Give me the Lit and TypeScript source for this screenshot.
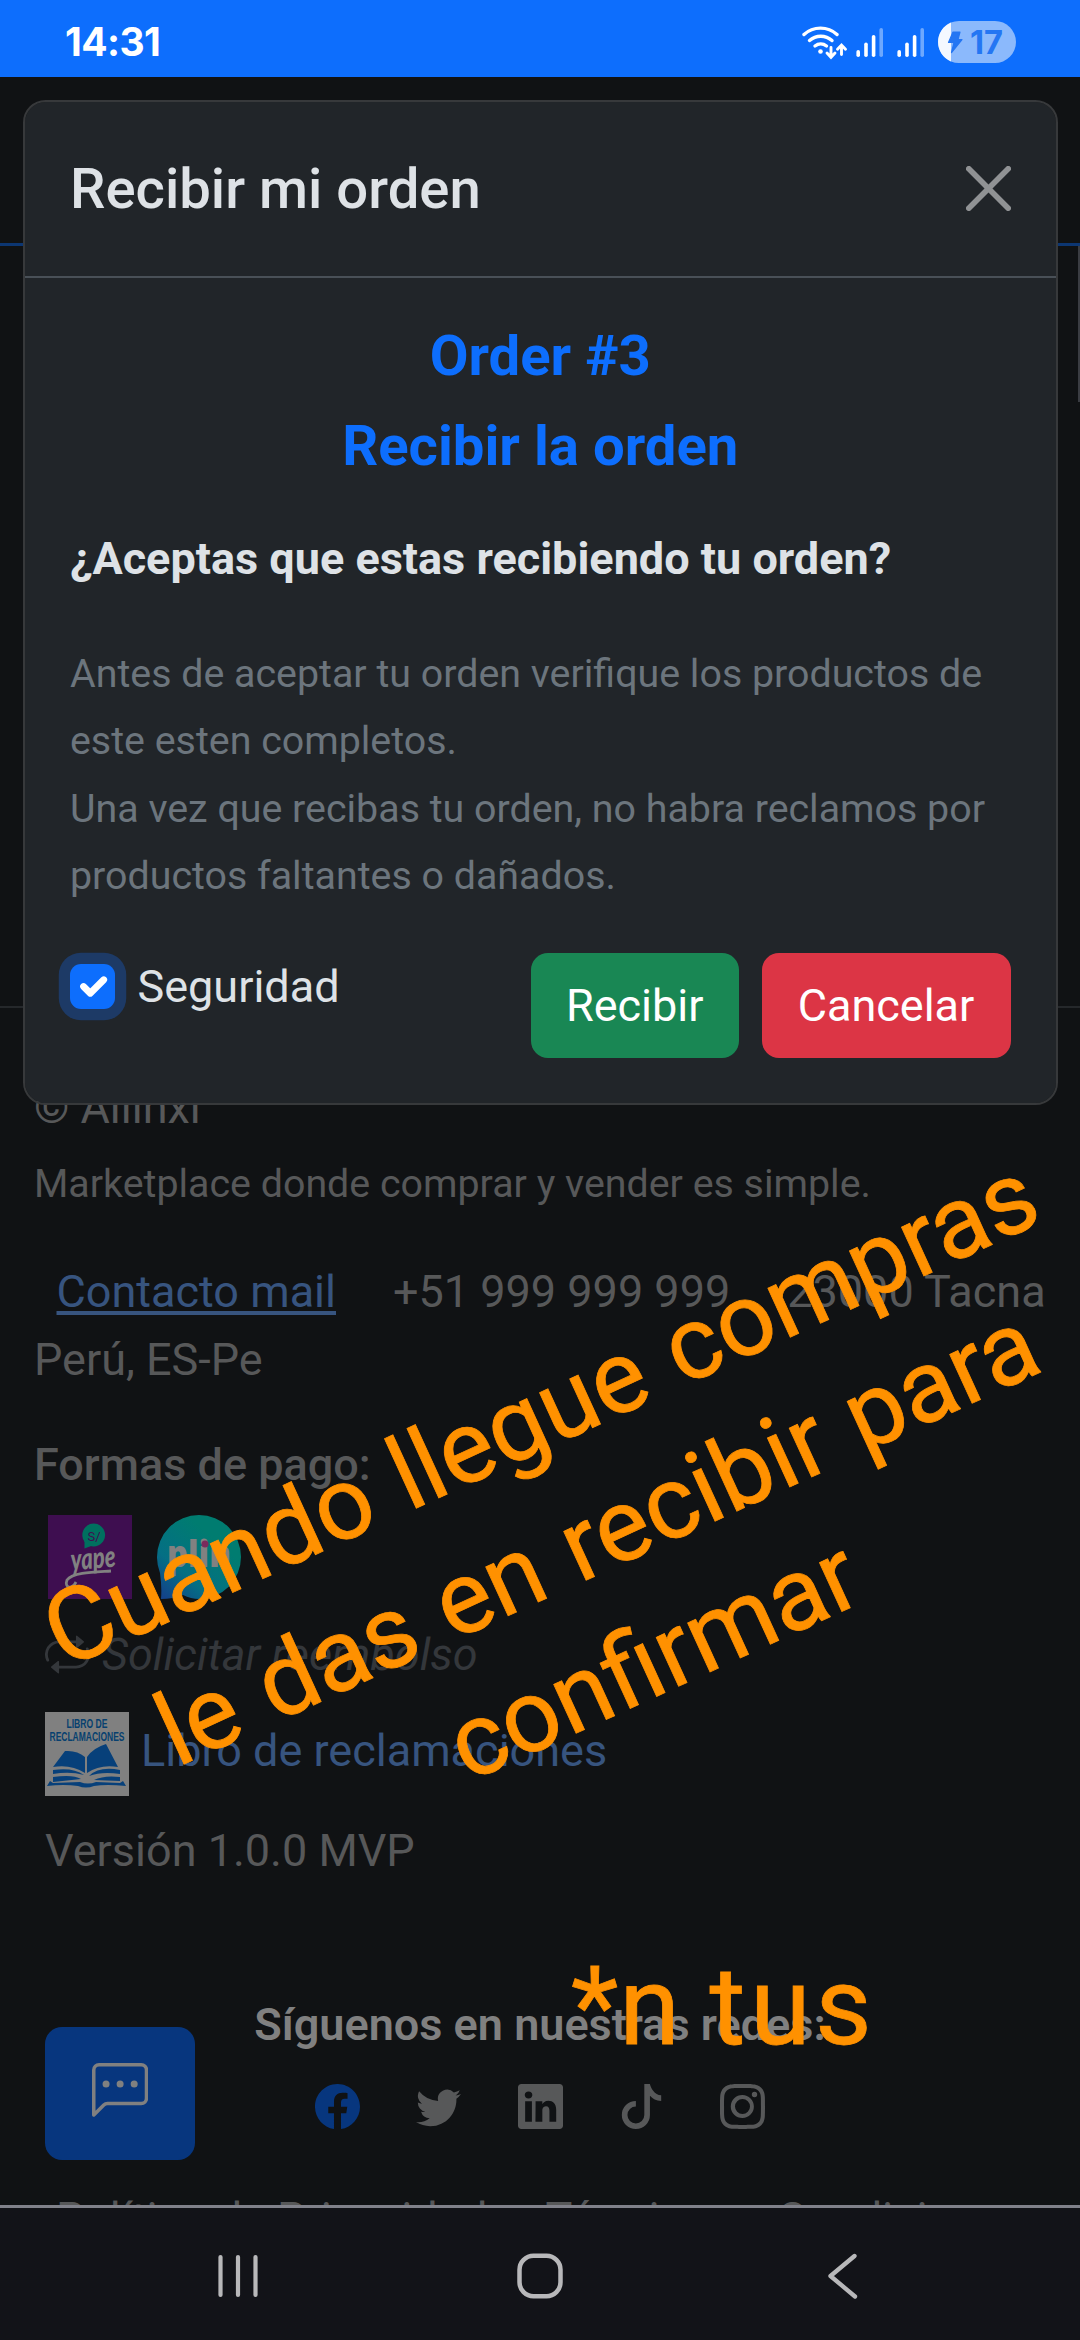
import { LitElement, html, css, svg } from "lit";
import { customElement } from "lit/decorators.js";

const ICONS: Record<string, string[]> = {
  facebook: [
    "M16 8.049c0-4.446-3.582-8.05-8-8.05C3.58 0-.002 3.603-.002 8.05c0 4.017 2.926 7.347 6.75 7.951v-5.625h-2.03V8.05H6.75V6.275c0-2.017 1.195-3.131 3.022-3.131.876 0 1.791.157 1.791.157v1.98h-1.009c-.993 0-1.303.621-1.303 1.258v1.51h2.218l-.354 2.326H9.25V16c3.824-.604 6.75-3.934 6.75-7.951",
  ],
  twitter: [
    "M5.026 15c6.038 0 9.341-5.003 9.341-9.334q.002-.211-.006-.422A6.7 6.7 0 0 0 16 3.542a6.7 6.7 0 0 1-1.889.518 3.3 3.3 0 0 0 1.447-1.817 6.5 6.5 0 0 1-2.087.793A3.286 3.286 0 0 0 7.875 6.03a9.32 9.32 0 0 1-6.767-3.429 3.29 3.29 0 0 0 1.018 4.382A3.3 3.3 0 0 1 .64 6.575v.045a3.29 3.29 0 0 0 2.632 3.218 3.2 3.2 0 0 1-.865.115 3 3 0 0 1-.614-.057 3.28 3.28 0 0 0 3.067 2.277A6.6 6.6 0 0 1 .78 13.58a6 6 0 0 1-.78-.045A9.34 9.34 0 0 0 5.026 15",
  ],
  linkedin: [
    "M0 1.146C0 .513.526 0 1.175 0h13.65C15.474 0 16 .513 16 1.146v13.708c0 .633-.526 1.146-1.175 1.146H1.175C.526 16 0 15.487 0 14.854zm4.943 12.248V6.169H2.542v7.225zm-1.2-8.212c.837 0 1.358-.554 1.358-1.248-.015-.709-.52-1.248-1.342-1.248S2.4 3.226 2.4 3.934c0 .694.521 1.248 1.327 1.248zm4.908 8.212V9.359c0-.216.016-.432.08-.586.173-.431.568-.878 1.232-.878.869 0 1.216.662 1.216 1.634v3.865h2.401V9.25c0-2.22-1.184-3.252-2.764-3.252-1.274 0-1.845.7-2.165 1.193v.025h-.016l.016-.025V6.169h-2.4c.03.678 0 7.225 0 7.225z",
  ],
  tiktok: [
    "M9 0h1.98c.144.715.54 1.617 1.235 2.512C12.895 3.389 13.797 4 15 4v2c-1.753 0-3.07-.814-4-1.829V11a5 5 0 1 1-5-5v2a3 3 0 1 0 3 3z",
  ],
  instagram: [
    "M8 0C5.829 0 5.556.01 4.703.048 3.85.088 3.269.222 2.76.42a3.9 3.9 0 0 0-1.417.923A3.9 3.9 0 0 0 .42 2.76C.222 3.268.087 3.85.048 4.7.01 5.555 0 5.827 0 8.001c0 2.172.01 2.444.048 3.297.04.852.174 1.433.372 1.942.205.526.478.972.923 1.417.444.445.89.719 1.416.923.51.198 1.09.333 1.942.372C5.555 15.99 5.827 16 8 16s2.444-.01 3.298-.048c.851-.04 1.434-.174 1.943-.372a3.9 3.9 0 0 0 1.416-.923c.445-.445.718-.891.923-1.417.197-.509.332-1.09.372-1.942C15.99 10.445 16 10.173 16 8s-.01-2.445-.048-3.299c-.04-.851-.175-1.433-.372-1.941a3.9 3.9 0 0 0-.923-1.417A3.9 3.9 0 0 0 13.24.42c-.51-.198-1.092-.333-1.943-.372C10.443.01 10.172 0 7.998 0zm-.717 1.442h.718c2.136 0 2.389.007 3.232.046.78.035 1.204.166 1.486.275.373.145.64.319.92.599s.453.546.598.92c.11.281.24.705.275 1.485.039.843.047 1.096.047 3.231s-.008 2.389-.047 3.232c-.035.78-.166 1.203-.275 1.485a2.5 2.5 0 0 1-.599.919c-.28.28-.546.453-.92.598-.28.11-.704.24-1.485.276-.843.038-1.096.047-3.232.047s-2.39-.009-3.233-.047c-.78-.036-1.203-.166-1.485-.276a2.5 2.5 0 0 1-.92-.598 2.5 2.5 0 0 1-.6-.92c-.109-.281-.24-.705-.275-1.485-.038-.843-.046-1.096-.046-3.233s.008-2.388.046-3.231c.036-.78.166-1.204.276-1.486.145-.373.319-.64.599-.92s.546-.453.92-.598c.282-.11.705-.24 1.485-.276.738-.034 1.024-.044 2.515-.045zm4.988 1.328a.96.96 0 1 0 0 1.92.96.96 0 0 0 0-1.92m-4.27 1.122a4.109 4.109 0 1 0 0 8.217 4.109 4.109 0 0 0 0-8.217m0 1.441a2.667 2.667 0 1 1 0 5.334 2.667 2.667 0 0 1 0-5.334",
  ],
  repeat: [
    "M11 5.466V4H5a4 4 0 0 0-3.584 5.777.5.5 0 1 1-.896.446A5 5 0 0 1 5 3h6V1.534a.25.25 0 0 1 .41-.192l2.36 1.966c.12.1.12.284 0 .384l-2.36 1.966a.25.25 0 0 1-.41-.192m3.81.086a.5.5 0 0 1 .67.225A5 5 0 0 1 11 13H5v1.466a.25.25 0 0 1-.41.192l-2.36-1.966a.25.25 0 0 1 0-.384l2.36-1.966a.25.25 0 0 1 .41.192V12h6a4 4 0 0 0 3.585-5.777.5.5 0 0 1 .225-.67z",
  ],
  chat: [
    "M14 1a1 1 0 0 1 1 1v8a1 1 0 0 1-1 1H4.414A2 2 0 0 0 3 11.586l-2 2V2a1 1 0 0 1 1-1zM2 0a2 2 0 0 0-2 2v12.793a.5.5 0 0 0 .854.353l2.853-2.853A1 1 0 0 1 4.414 12H14a2 2 0 0 0 2-2V2a2 2 0 0 0-2-2z",
    "M5 6a1 1 0 1 1-2 0 1 1 0 0 1 2 0m4 0a1 1 0 1 1-2 0 1 1 0 0 1 2 0m4 0a1 1 0 1 1-2 0 1 1 0 0 1 2 0",
  ],
  close: [
    "M.293.293a1 1 0 0 1 1.414 0L8 6.586 14.293.293a1 1 0 1 1 1.414 1.414L9.414 8l6.293 6.293a1 1 0 0 1-1.414 1.414L8 9.414l-6.293 6.293a1 1 0 0 1-1.414-1.414L6.586 8 .293 1.707a1 1 0 0 1 0-1.414",
  ],
};

const icon = (name: string, cls = "") => html`
  <svg class="icon ${cls}" viewBox="0 0 16 16" fill="currentColor">
    ${ICONS[name].map((d) => svg`<path d=${d}></path>`)}
  </svg>
`;

@customElement("status-bar")
class StatusBar extends LitElement {
  static styles = css`
    :host {
      display: flex;
      align-items: center;
      box-sizing: border-box;
      height: 77px;
      padding: 0 64px 0 65px;
      background: #0d6efd;
      color: #fff;
      font-family: Inter, Roboto, sans-serif;
    }
    .time {
      flex: 1;
      font-size: 39px;
      line-height: 46px;
      font-weight: 700;
      letter-spacing: -0.6px;
      padding-top: 7px;
    }
    .signals {
      width: 214px;
      height: 42px;
      padding-top: 7px;
    }
    .num {
      font: 700 32px Inter, Roboto, sans-serif;
    }
  `;
  render() {
    return html`
      <div class="time">14:31</div>
      <svg class="signals" viewBox="802 21 214 42">
        <g fill="none" stroke="#fff" stroke-width="3.4" stroke-linecap="round">
          <path d="M804 34.500a24.500 24.500 0 0 1 33 0"></path>
          <path d="M809.500 40.500a17 17 0 0 1 22.500 0"></path>
          <path d="M815 46a9.500 9.500 0 0 1 11.500 0"></path>
          <path d="M831 47.500v9.500m-4-4l4 4.300 4-4.300" stroke-width="2.900"></path>
          <path d="M841.500 54.500v-9m-4 3.700l4-4.200 4 4.200" stroke-width="2.900"></path>
        </g>
        <circle cx="820.500" cy="51.500" r="2.300" fill="#fff"></circle>
        ${[856.4, 897.4].map(
          (x) => svg`
          <g fill="#fff">
            <rect x=${x} y="50" width="3.600" height="7" rx="1.800"></rect>
            <rect x=${x + 7.8} y="42.500" width="3.600" height="14.500" rx="1.800"></rect>
            <rect x=${x + 15.4} y="35" width="3.600" height="22" rx="1.800"></rect>
            <rect x=${x + 23} y="28" width="3.600" height="29" rx="1.800" opacity="0.400"></rect>
          </g>`
        )}
        <path d="M959 21h36a21 21 0 0 1 0 42h-36a21 21 0 0 1 0-42z" fill="#8bb9fc"></path>
        <path d="M951 22.600v38.800a21 21 0 0 1 0-38.800z" fill="#f4f8ff"></path>
        <path d="M953 32h7l-2 7.500h4l-10.500 13 2.500-10h-5.500z" fill="#2476f3" stroke="#2476f3" stroke-width="1.200" stroke-linejoin="round"></path>
        <text class="num" x="970" y="53.500" textLength="33" lengthAdjust="spacingAndGlyphs" fill="#2476f3">17</text>
      </svg>
    `;
  }
}

@customElement("site-footer")
class SiteFooter extends LitElement {
  static styles = css`
    :host {
      display: flex;
      flex-direction: column;
      height: 1199px;
      box-sizing: border-box;
      border-top: 2px solid #25282b;
      padding: 66px 34px 0;
      color: #575859;
      font-size: 45px;
      line-height: 67.5px;
      overflow: hidden;
      white-space: nowrap;
    }
    .icon {
      width: 45px;
      height: 45px;
      display: block;
    }
    .tagline {
      font-size: 39.375px;
      margin-top: 8px;
    }
    .contact {
      display: flex;
      gap: 57px;
      margin-top: 41px;
      padding-left: 22.5px;
    }
    .link {
      color: #37547f;
    }
    .mail {
      text-decoration: underline;
      text-decoration-thickness: 4px;
      text-underline-offset: 4px;
    }
    .heading {
      font-weight: 500;
      margin-top: 38px;
    }
    .pay {
      display: flex;
      gap: 25px;
      margin-top: 16px;
      padding-left: 14px;
    }
    .logo {
      width: 84px;
      height: 84px;
      display: block;
    }
    .refund {
      display: flex;
      align-items: center;
      gap: 12px;
      margin-top: 22.5px;
      padding-left: 11px;
      color: #34373b;
      font-style: italic;
    }
    .book {
      display: flex;
      gap: 14px;
      margin-top: 23px;
      padding-left: 11px;
    }
    .book .link {
      margin: 5px 0 0 -2px;
    }
    .version {
      margin-top: 21.5px;
      padding-left: 11px;
    }
    .follow {
      margin-top: 106px;
      text-align: center;
      font-weight: 600;
      color: #808080;
    }
    .social {
      display: flex;
      justify-content: center;
      gap: 56.25px;
      margin-top: 26px;
    }
    .fb {
      color: #07367e;
    }
    .legal {
      display: flex;
      gap: 58px;
      margin-top: 56px;
      padding-left: 22px;
    }
    .yape {
      font: italic 900 30px Lato, sans-serif;
    }
    .plin {
      font: 800 37px "Open Sans", sans-serif;
    }
    .libro {
      font: 700 12px "Liberation Sans", sans-serif;
    }
    .sol {
      font: 400 13px Roboto, sans-serif;
    }
  `;
  render() {
    return html`
      <div>© Allinxi</div>
      <div class="tagline">Marketplace donde comprar y vender es simple.</div>
      <div class="contact">
        <span class="link mail">Contacto mail</span><span>+51 999 999 999</span><span>23000 Tacna</span>
      </div>
      <div>Perú, ES-Pe</div>
      <div class="heading">Formas de pago:</div>
      <div class="pay">
        <svg class="logo" viewBox="0 0 84 84">
          <rect width="84" height="84" fill="#3e0e50"></rect>
          <circle cx="45.700" cy="20" r="11.400" fill="#00705f"></circle>
          <path d="M36.500 24v9.500l8-3z" fill="#00705f"></path>
          <text class="sol" x="39.500" y="25.500" fill="#3e0e50">S/</text>
          <text class="yape" x="23" y="54" textLength="45" lengthAdjust="spacingAndGlyphs" fill="#818181" transform="rotate(-5 40 50)">yape</text>
          <path d="M63 56C48 57 25 57 19 65c-3 8 5 10 9 2" fill="none" stroke="#818181" stroke-width="2.800"></path>
        </svg>
        <svg class="logo" viewBox="0 0 84 84">
          <defs>
            <linearGradient id="pg" x1="0.050" y1="0.950" x2="0.650" y2="0.250">
              <stop offset="0" stop-color="#13438a"></stop>
              <stop offset="0.400" stop-color="#046f84"></stop>
              <stop offset="1" stop-color="#007c70"></stop>
            </linearGradient>
          </defs>
          <path d="M0 42a42 42 0 1 1 42 42q-8 0-16-4-10 4-22 4 1-12-1-26a42 42 0 0 1-3-16z" fill="url(#pg)"></path>
          <text class="plin" x="10" y="52" textLength="64" lengthAdjust="spacingAndGlyphs" fill="#818181">plin</text>
          <circle cx="48" cy="29" r="3.500" fill="#7a2a5c"></circle>
        </svg>
      </div>
      <div class="refund">${icon("repeat")}<span>Solicitar reembolso</span></div>
      <div class="book">
        <svg class="logo" viewBox="0 0 84 84">
          <rect width="84" height="84" fill="#808080"></rect>
          <g class="libro" fill="#07406f" text-anchor="middle">
            <text x="42" y="16" textLength="41" lengthAdjust="spacingAndGlyphs">LIBRO DE</text>
            <text x="42" y="28.800" textLength="75" lengthAdjust="spacingAndGlyphs">RECLAMACIONES</text>
          </g>
          <g fill="#07407a">
            <path d="M8 55L20 39q12-1 20 6v16q-14-9-32-6z"></path>
            <path d="M42 61V45q6-9 19-13l12 23q-18-3-31 6z"></path>
            <path d="M8 58q20-3 31 5-14-4-31-1z"></path>
            <path d="M44 64q10-10 31-6v4q-18-3-31 2z"></path>
            <path d="M8 65q20-3 28 2l-28 3z"></path>
            <path d="M49 68q10-5 26-3v4z"></path>
            <path d="M5 69l3 2 27-1q8 3 16 0l24 1 3-2 3 5q-20-2-32 0-8 3-16 0-14-2-31 0z"></path>
          </g>
        </svg>
        <span class="link">Libro de reclamaciones</span>
      </div>
      <div class="version">Versión 1.0.0 MVP</div>
      <div class="follow">Síguenos en nuestras redes:</div>
      <div class="social">
        ${icon("facebook", "fb")}${icon("twitter")}${icon("linkedin")}${icon("tiktok")}${icon("instagram")}
      </div>
      <div class="legal"><span>Política de Privacidad</span><span>Términos y Condiciones</span></div>
    `;
  }
}

@customElement("receive-dialog")
class ReceiveDialog extends LitElement {
  static styles = css`
    :host {
      display: flex;
      flex-direction: column;
      box-sizing: border-box;
      border: 2px solid #37393b;
      border-radius: 22.5px;
      background: #212529;
      background-clip: padding-box;
      color: #dee2e6;
      font-size: 45px;
      line-height: 67.5px;
      white-space: nowrap;
    }
    .head {
      display: flex;
      align-items: center;
      justify-content: space-between;
      height: 174px;
      padding: 0 45px;
      border-bottom: 2px solid #495057;
    }
    .title {
      font-size: 56.25px;
      line-height: 84.4px;
      font-weight: 500;
    }
    .icon {
      width: 45px;
      height: 45px;
      margin-bottom: 2px;
      color: #909294;
      display: block;
    }
    .body {
      padding: 45px 45px 44px;
    }
    .blue {
      font-size: 56.25px;
      font-weight: 700;
      text-align: center;
      color: #0d6efd;
      margin-bottom: 22.5px;
    }
    .ask {
      font-weight: 700;
      margin-top: 44.5px;
    }
    .note {
      font-size: 39.375px;
      color: #6c757d;
      margin-top: 47px;
    }
    .foot {
      display: flex;
      align-items: flex-start;
      margin-top: 43px;
    }
    .check {
      display: flex;
      gap: 22.5px;
      flex: 1;
    }
    .box {
      width: 45px;
      height: 45px;
      margin-top: 11px;
      border-radius: 11px;
      background: #0d6efd;
      box-shadow: 0 0 0 11.25px #1d3a66;
      display: block;
    }
    .btn {
      box-sizing: border-box;
      height: 105px;
      border-radius: 17px;
      line-height: 105px;
      text-align: center;
      color: #fff;
      width: 208.5px;
      background: #198754;
    }
    .cancel {
      width: 249px;
      background: #dc3545;
      margin-left: 22.5px;
    }
  `;
  render() {
    return html`
      <div class="head"><span class="title">Recibir mi orden</span>${icon("close")}</div>
      <div class="body">
        <div class="blue">Order #3</div>
        <div class="blue">Recibir la orden</div>
        <div class="ask">¿Aceptas que estas recibiendo tu orden?</div>
        <div class="note">
          Antes de aceptar tu orden verifique los productos de<br />este esten completos.<br />Una vez que
          recibas tu orden, no habra reclamos por<br />productos faltantes o dañados.
        </div>
        <div class="foot">
          <div class="check">
            <svg class="box" viewBox="0 0 20 20">
              <path d="m6 10 3 3 6-6" fill="none" stroke="#fff" stroke-width="3" stroke-linecap="round" stroke-linejoin="round"></path>
            </svg>
            <span>Seguridad</span>
          </div>
          <div class="btn">Recibir</div>
          <div class="btn cancel">Cancelar</div>
        </div>
      </div>
    `;
  }
}

@customElement("nav-bar")
class NavBar extends LitElement {
  static styles = css`
    :host {
      display: grid;
      grid-template-columns: 238px 604px 238px;
      align-items: center;
      box-sizing: border-box;
      height: 135px;
      border-top: 3px solid #80818a;
      background: #121318;
    }
    .glyph {
      width: 50px;
      height: 50px;
      display: block;
      margin: 4px auto 0;
    }
    .start {
      margin-right: -25px;
    }
    .end {
      margin-left: -25px;
    }
  `;
  render() {
    return html`
      <svg class="glyph start" viewBox="0 0 50 50" stroke="#b8b8ba" stroke-width="4.200" stroke-linecap="round">
        <path d="M7.500 6v38M25 6v38M42.500 6v38"></path>
      </svg>
      <svg class="glyph" viewBox="0 0 50 50" fill="none" stroke="#b8b8ba" stroke-width="4.500">
        <rect x="4.500" y="4.800" width="41" height="40.500" rx="14"></rect>
      </svg>
      <svg class="glyph end" viewBox="0 0 50 50" fill="none" stroke="#b8b8ba" stroke-width="4.300" stroke-linecap="round" stroke-linejoin="round">
        <path d="M37.500 5L13.500 25 38 45.500"></path>
      </svg>
    `;
  }
}

@customElement("app-root")
class AppRoot extends LitElement {
  static styles = css`
    :host {
      display: flex;
      flex-direction: column;
      position: relative;
      width: 1080px;
      height: 2340px;
      overflow: hidden;
      background: #101214;
      font-family: Roboto, sans-serif;
    }
    .topbar {
      box-sizing: border-box;
      height: 169px;
      border-bottom: 3px solid #0c3672;
    }
    .content {
      height: 760px;
      display: flex;
      justify-content: flex-end;
    }
    .scroll {
      width: 2px;
      height: 156px;
      background: #3a3c42;
    }
    .dialog {
      position: absolute;
      left: 23px;
      top: 100px;
      width: 1034.5px;
      height: 1004.5px;
    }
    .fab {
      position: absolute;
      left: 45px;
      top: 2027px;
      width: 150px;
      height: 133px;
      border-radius: 17px;
      background: #07367e;
      color: #808080;
      display: flex;
      justify-content: center;
      padding-top: 36px;
      box-sizing: border-box;
    }
    .icon {
      width: 56.25px;
      height: 56.25px;
      display: block;
    }
    .note {
      position: absolute;
      color: #ff9100;
      white-space: nowrap;
      -webkit-text-stroke: 0.8px #ff9100;
    }
    .tilted {
      left: 597px;
      top: 1537px;
      font-size: 102px;
      line-height: 135.5px;
      word-spacing: 4px;
      text-align: center;
      transform: translate(-50%, -50%) rotate(-24.6deg);
    }
    .flat {
      left: 571px;
      top: 1940px;
      font-size: 110px;
      line-height: 134px;
      letter-spacing: 1px;
    }
    .wide {
      letter-spacing: 4.5px;
    }
  `;
  render() {
    return html`
      <status-bar></status-bar>
      <div class="topbar"></div>
      <div class="content"><div class="scroll"></div></div>
      <site-footer></site-footer>
      <nav-bar></nav-bar>
      <div class="fab">${icon("chat")}</div>
      <receive-dialog class="dialog"></receive-dialog>
      <div class="note tilted">Cuando llegue compras<br />le das en recibir para<br />confirmar</div>
      <div class="note flat">*n <span class="wide">tus</span></div>
    `;
  }
}
